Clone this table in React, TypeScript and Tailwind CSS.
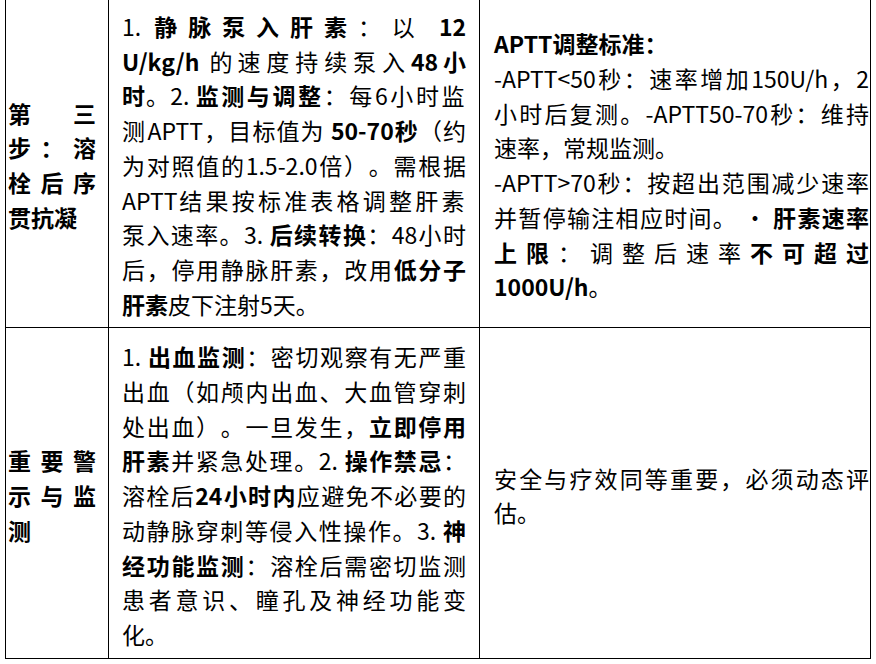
const FONT = "font-['Noto_Sans_CJK_SC','Noto_Sans',sans-serif]";

function B({ children }: { children: React.ReactNode }) {
  return <strong className="font-bold">{children}</strong>;
}

export default function App() {
  const cell = 'border border-black align-middle text-justify pt-[11px] pb-[6px]';
  return (
    <div className={`bg-white min-h-screen text-black ${FONT}`}>
      <table className="ml-[5px] -mt-[3px] border-collapse table-fixed w-[865px] text-[23px] leading-[34.7px] [text-spacing-trim:space-all]">
        <colgroup>
          <col className="w-[103px]" />
          <col className="w-[371px]" />
          <col className="w-[391px]" />
        </colgroup>
        <tbody>
          <tr>
            <td className={`${cell} pl-[2px] pr-[12px] font-bold`}>第三步：溶栓后序贯抗凝</td>
            <td className={`${cell} pl-[13px] pr-[13px]`}>
              1. <span className="tracking-[3px]"><B>静脉泵入肝素</B>：以</span> <B>12 U/kg/h</B> 的
              <span className="tracking-[1px]">速度持续泵入</span><B>48小时</B>。2.{' '}
              <span className="tracking-[1.5px]"><B>监测与调整</B>：每6小时监测</span>APTT，目标值为 <B>50-70秒</B>（约为对照值的1.5-2.0倍）。需根据APTT
              <span className="tracking-[1.5px]">结果按标准表格调整肝素</span>泵入速率。3. <B>后续转换</B>：48小时后，停用静脉肝素，改用<B>低分子肝素</B>皮下注射5天。
            </td>
            <td className={`${cell} pl-[14px] pr-[1px]`}>
              <p><B>APTT调整标准：</B></p>
              <p>-APTT&lt;50秒：速率增加150U/h，2小时后复测。-APTT50-70秒：维持速率，常规监测。</p>
              <p>
                -APTT&gt;70秒：按超出范围减少速率并暂停输注相应时间。 • <B>肝素速率上限</B>：调整后速率<B>不可超过1000U/h</B>。
              </p>
            </td>
          </tr>
          <tr>
            <td className={`${cell} pl-[2px] pr-[12px] font-bold`}>重要警示与监测</td>
            <td className={`${cell} pl-[13px] pr-[13px]`}>
              1. <B>出血监测</B>：密切观察有无严重出血（如颅内出血、大血管穿刺处出血）。一旦发生，<B>立即停用肝素</B>并紧急处理。2. <B>操作禁忌</B>：溶栓后<B>24小时内</B>应避免不必要的动静脉穿刺等侵入性操作。3. <B>神经功能监测</B>：溶栓后需密切监测患者意识、瞳孔及神经功能变化。
            </td>
            <td className={`${cell} pl-[14px] pr-[1px]`}>安全与疗效同等重要，必须动态评估。</td>
          </tr>
        </tbody>
      </table>
    </div>
  );
}
